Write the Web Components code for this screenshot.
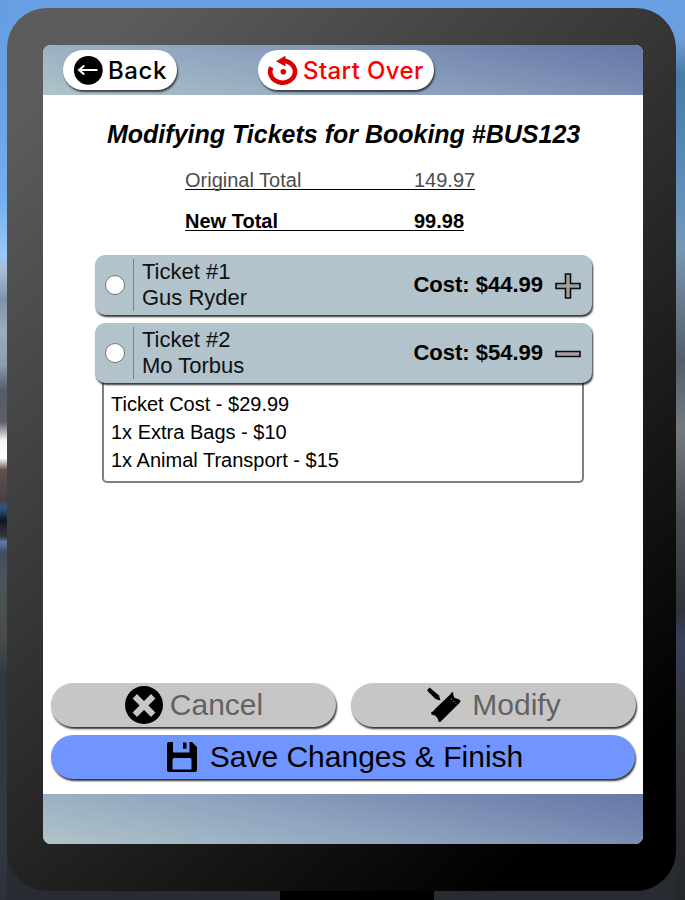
<!DOCTYPE html>
<html lang="en">
<head>
<meta charset="utf-8">
<title>Modify Tickets</title>
<style>
html, body { margin: 0; height: 100%; overflow: hidden; }
body { font-family: "Liberation Sans", Arial, sans-serif; color: #000; }
</style>
</head>
<body>
<kiosk-app></kiosk-app>
<script>
const define = (name, html, setup) => {
  const template = document.createElement('template');
  template.innerHTML = html;
  customElements.define(name, class extends HTMLElement {
    constructor() {
      super();
      this.attachShadow({ mode: 'open' }).append(template.content.cloneNode(true));
    }
    connectedCallback() { if (setup) setup(this, this.shadowRoot); }
  });
};

const ICONS = {
  back: '<svg width="30" height="30" viewBox="0 0 30 30"><circle cx="15.300" cy="15.300" r="14.400"/><path d="M24.500 15H6.500M11.300 10.500L6 15l5.300 4.500" fill="none" stroke="#fff" stroke-width="2"/></svg>',
  restart: '<svg width="30" height="30" viewBox="0 0 30 30"><path d="M3.300 12.200A12.400 11 0 1 0 15 5.700" fill="none" stroke="#d90000" stroke-width="4.600"/><path d="M8 6.200L17.500.800v10.600z" fill="#d90000"/><circle cx="15.300" cy="16.800" r="2.800" fill="#d90000"/></svg>',
  cancel: '<svg width="38" height="38" viewBox="1 1 38 38"><circle cx="20" cy="20" r="19"/><path d="M13 13.500l14 14M27 13.500l-14 14" stroke="#c6c6c6" stroke-width="6.200" stroke-linecap="square" fill="none"/></svg>',
  modify: '<svg width="36" height="36" viewBox="0 0 36 36"><path d="M0 3.500L2.500.5 12 8.500l1.500 5-5-1.500z"/><path d="M8 22L23.700 7l.8-1.700 1.800.4.2 2.800q1 3.500 4.500 3.300l2.700 2L32.500 16 13 35.200l-1.500-.7-1-3.500L8 28.500l-3.500-1L4 25.500 6.500 24z"/><path d="M23.800 11.500l5.500 5.500" stroke="#c6c6c6" stroke-width="1" stroke-dasharray="1.500 2"/></svg>',
  save: '<svg width="30" height="30" viewBox="0 0 30 30"><path fill-rule="evenodd" d="M2 0h4v9.500q0 1 1 1h14.500q1 0 1-1V0H25l5 5v23q0 2-2 2H2q-2 0-2-2V2Q0 0 2 0zM7 16q-1.500 0-1.500 1.500v10h19v-10Q24.500 16 23 16z"/><path d="M16 .5h3.500v6.300H16z"/></svg>',
  plus: '<svg width="26" height="26" viewBox="0 0 26 26"><path d="M10.500 1h5v9.500H25v5h-9.500V25h-5v-9.500H1v-5h9.500z" fill="#a3a19b" stroke="#0c0c0c" stroke-width="1.600"/></svg>',
  minus: '<svg width="26" height="26" viewBox="0 0 26 26"><path d="M1 10.500h24v5H1z" fill="#a3a19b" stroke="#0c0c0c" stroke-width="1.600"/></svg>'
};

define('ui-icon', '<style>:host{display:block;flex:none}svg{display:block}</style>', (el, root) => {
  const holder = document.createElement('span');
  holder.innerHTML = ICONS[el.getAttribute('name')];
  root.append(holder.firstElementChild);
});

define('nav-button', `
<style>
:host { display:flex; align-items:center; gap:5px; box-sizing:border-box; height:40px; padding:0 10px;
  border-radius:20px; background:#fff; box-shadow:1px 2px 2px rgba(0,0,0,.65);
  font:500 24px/38px Inter, "Open Sans", sans-serif; white-space:nowrap; }
::slotted(span) { padding-top:2px; }
</style>
<slot name="icon"></slot><slot></slot>`);

define('action-button', `
<style>
:host { display:flex; align-items:center; justify-content:center; box-sizing:border-box; height:44px;
  border-radius:22px; background:#7195ff; font-size:30px; line-height:44px; white-space:nowrap;
  box-shadow:1px 2px 2px rgba(0,0,0,.8); }
:host([disabled]) { background:#c6c6c6; color:#626262; }
::slotted(ui-icon) { color:#000; }
</style>
<slot name="icon"></slot><slot></slot>`);

define('total-line', `
<style>
:host { display:grid; grid-template-columns:229px auto; box-sizing:border-box; width:max-content; margin-left:142px; height:21px;
  padding-top:1px; line-height:20px; font-size:20px; border-bottom:1px solid #000; color:#4c4c4c; }
:host([strong]) { font-weight:700; color:#000; }
</style>
<slot name="label"></slot><slot></slot>`);

define('ticket-card', `
<style>
:host { display:block; }
.head { position:relative; z-index:1; display:flex; align-items:center; box-sizing:border-box; height:60px; padding:4px 11px 4px 10px;
  border-radius:10px; background:#b2c3cb; box-shadow:1px 2px 2px rgba(0,0,0,.8); }
input { appearance:none; flex:none; box-sizing:border-box; width:20px; height:20px; margin:0 8px 0 0; border:1px solid #767676; border-radius:50%; background:#fff; }
.who { display:flex; flex-direction:column; box-sizing:border-box; height:52px; border-left:1px solid #808080; padding-left:8px;
  font-size:22px; line-height:26px; flex:1; color:#111; }
.cost { font-size:22px; font-weight:700; margin-right:12px; }
ui-icon { margin-top:2px; }
.body { display:none; box-sizing:border-box; width:482px; height:100px; margin-left:7px; padding:7px;
  border:2px solid #808080; border-top:0; border-radius:0 0 5px 5px; font-size:20px; line-height:28px; }
:host([open]) .body { display:block; }
</style>
<div class="head"><input type="radio" aria-label="Select ticket">
<div class="who"><slot name="number"></slot><slot name="name"></slot></div>
<span class="cost"><slot name="cost"></slot></span></div>
<div class="body"><slot></slot></div>`, (el, root) => {
  const icon = document.createElement('ui-icon');
  icon.setAttribute('name', el.hasAttribute('open') ? 'minus' : 'plus');
  root.querySelector('.head').append(icon);
});

define('kiosk-app', `
<style>
:host { display:block; box-sizing:border-box; width:685px; height:900px; padding:8px 9px 0 7px; overflow:hidden;
  background:
    linear-gradient(#000,#000) 280px 891px / 154px 9px no-repeat,
    linear-gradient(#689fe1 0,#6b9fd9 40px,#4b79aa 75px,#5787b9 150px,#7698b4 250px,#697b8b 300px,#525e68 360px,#737b81 430px,#474b51 520px,#30323a 610px,#38405a 640px,#33363b 720px,#292b31 830px,#25272c 900px) 676px 0 / 9px 900px no-repeat,
    linear-gradient(#639de2 0,#68a2e7 100px,#72aff0 200px,#9bc8f6 255px,#a6bbd0 272px,#7e93a9 300px,#9cadb8 330px,#8b9eab 365px,#555b68 390px,#5e6066 422px,#f4f4f4 440px,#fff 458px,#63504f 470px,#493f43 500px,#2e5685 508px,#101722 520px,#36383d 537px,#637caa 542px,#424b61 552px,#4d5457 580px,#484b4b 640px,#303943 675px,#313943 830px,#2f3039 900px) 0 0 / 7px 900px no-repeat,
    linear-gradient(#69a0e4 0 50%,#282b31 50%); }
.bezel { box-sizing:border-box; width:669px; height:883px; padding:37px 33px 47px 36px; border-radius:40px;
  background:linear-gradient(137deg,#5c5c5c 8%,#000 89%); }
.screen { display:flex; flex-direction:column; width:600px; height:799px; border-radius:8px; overflow:hidden; background:#fff; }
header, footer { flex:none; box-sizing:border-box; height:50px; background:linear-gradient(12deg,#b0c4c9 0,#8fa4bf 45%,#6f81ad 86%,#6778a8 100%); }
header { display:flex; align-items:flex-start; padding:5px 0 0 20px; gap:81px; }
.back { width:114px; letter-spacing:.6px; } .over { width:176px; color:#f00; letter-spacing:.4px; }
main { flex:1; display:flex; flex-direction:column; min-height:0; }
h1 { margin:25px 0 0 64px; font:italic 700 25px/29px "Liberation Sans",Arial,sans-serif; white-space:nowrap; }
.totals { display:flex; flex-direction:column; gap:20px; margin-top:20px; }
.tickets { display:flex; flex-direction:column; gap:8px; width:497px; margin:24px 0 0 52px; }
.actions { display:grid; grid-template-columns:285px 285px; gap:8px 15px; margin:auto 0 15px 8px; }
.minor { padding-left:1px; }
.save { grid-column:1 / 3; width:584px; padding-left:4px; }
</style>
<div class="bezel"><div class="screen">
<header>
<nav-button class="back"><ui-icon slot="icon" name="back"></ui-icon><span>Back</span></nav-button>
<nav-button class="over"><ui-icon slot="icon" name="restart"></ui-icon><span>Start Over</span></nav-button>
</header>
<main>
<h1>Modifying Tickets for Booking #BUS123</h1>
<div class="totals">
<total-line><span slot="label">Original Total</span><span>149.97</span></total-line>
<total-line strong><span slot="label">New Total</span><span>99.98</span></total-line>
</div>
<div class="tickets">
<ticket-card><span slot="number">Ticket #1</span><span slot="name">Gus Ryder</span><span slot="cost">Cost: $44.99</span></ticket-card>
<ticket-card open><span slot="number">Ticket #2</span><span slot="name">Mo Torbus</span><span slot="cost">Cost: $54.99</span>
<div>Ticket Cost - $29.99</div><div>1x Extra Bags - $10</div><div>1x Animal Transport - $15</div></ticket-card>
</div>
<div class="actions">
<action-button class="minor" disabled><ui-icon slot="icon" name="cancel" style="margin-right:7px"></ui-icon><span>Cancel</span></action-button>
<action-button class="minor" disabled><ui-icon slot="icon" name="modify" style="margin-right:9px"></ui-icon><span>Modify</span></action-button>
<action-button class="save"><ui-icon slot="icon" name="save" style="margin-right:13px"></ui-icon><span>Save Changes &amp; Finish</span></action-button>
</div>
</main>
<footer></footer>
</div></div>`);
</script>
</body>
</html>
